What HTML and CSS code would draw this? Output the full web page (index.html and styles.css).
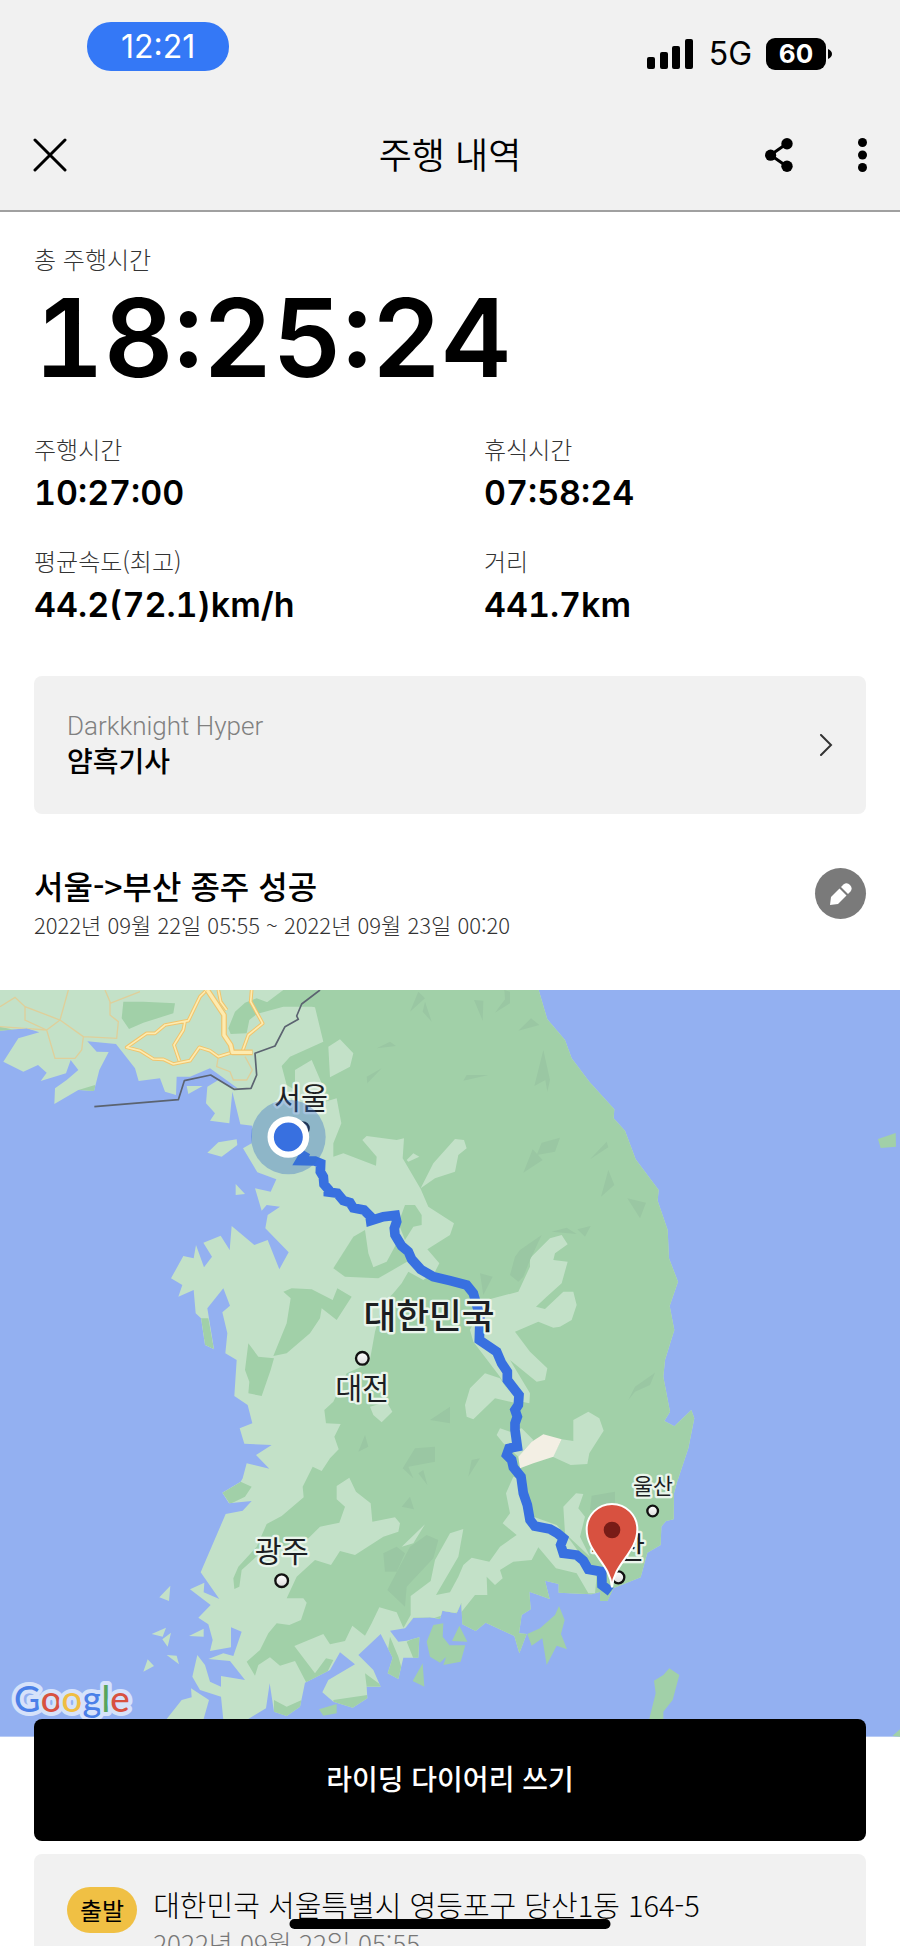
FILE: index.html
```html
<!DOCTYPE html>
<html lang="ko">
<head>
<meta charset="utf-8">
<meta name="viewport" content="width=device-width, initial-scale=1">
<title>주행 내역</title>
<link rel="stylesheet" href="styles.css">
</head>
<body>
<div class="app">
  <div class="top">
    <div class="status">
      <span class="clock">12:21</span>
      <div class="status-right">
        <svg class="signal" viewBox="0 0 46 30" aria-hidden="true"><rect x="0" y="18" width="8" height="12" rx="2"/><rect x="13" y="13" width="8" height="17" rx="2"/><rect x="25" y="7" width="8" height="23" rx="2"/><rect x="38" y="0" width="8" height="30" rx="2"/></svg>
        <span class="network">5G</span>
        <span class="battery"><span class="battery-body">60</span><svg class="battery-tip" viewBox="0 0 4 10" aria-hidden="true"><path d="M0 0Q4 2 4 5T0 10Z"/></svg></span>
      </div>
    </div>
    <header class="header">
      <button class="icon-btn" aria-label="닫기"><svg width="34" height="34" viewBox="0 0 34 34" fill="none" stroke="#000" stroke-width="3" stroke-linecap="round"><path d="M2 2L32 32M32 2L2 32"/></svg></button>
      <h1 class="header-title">주행 내역</h1>
      <div class="header-actions">
        <button class="icon-btn" aria-label="공유"><svg width="28" height="34" viewBox="0 0 28 34"><path d="M22 5.500L5.500 17L22 28.500" fill="none" stroke="#000" stroke-width="3"/><circle cx="22" cy="5.700" r="5.700"/><circle cx="5.600" cy="17.200" r="5.600"/><circle cx="22" cy="28.300" r="5.700"/></svg></button>
        <button class="icon-btn" aria-label="더보기"><svg width="9" height="34" viewBox="0 0 9 34"><circle cx="4.500" cy="4.500" r="4.500"/><circle cx="4.500" cy="17" r="4.500"/><circle cx="4.500" cy="29.500" r="4.500"/></svg></button>
      </div>
    </header>
  </div>

  <main class="main">
    <section class="summary">
      <p class="label">총 주행시간</p>
      <p class="total">18:25:24</p>
      <dl class="stats">
        <div><dt class="label">주행시간</dt><dd class="value">10:27:00</dd></div>
        <div><dt class="label">휴식시간</dt><dd class="value">07:58:24</dd></div>
        <div><dt class="label">평균속도(최고)</dt><dd class="value">44.2(72.1)km/h</dd></div>
        <div><dt class="label">거리</dt><dd class="value">441.7km</dd></div>
      </dl>
      <a class="bike" href="#bike">
        <span class="bike-text"><span class="bike-model">Darkknight Hyper</span><span class="bike-name">얌흑기사</span></span>
        <svg width="14" height="22" viewBox="0 0 14 22" fill="none" stroke="#333" stroke-width="2" stroke-linecap="round" aria-hidden="true"><path d="M2 1L12 11L2 21"/></svg>
      </a>
      <div class="ride">
        <div>
          <h2 class="ride-title">서울-&gt;부산 종주 성공</h2>
          <p class="ride-date">2022년 09월 22일 05:55 ~ 2022년 09월 23일 00:20</p>
        </div>
        <button class="edit" aria-label="제목 수정"><svg width="22" height="22" viewBox="0 0 22 22" fill="#fff" aria-hidden="true"><path d="M9.500 5.500L16.500 12.500L8 21L0 22L1 14Z"/><path d="M11 4L13.500 1.500Q17 -1 20 2T20.500 8.500L18 11Z"/></svg></button>
      </div>
    </section>

    <svg class="map" viewBox="0 0 2700 2240" role="img" aria-label="서울에서 부산까지의 주행 경로">
      <defs>
        <path id="land" d="M0 0L1616 0L1642 88L1695 150L1715 205L1768 275L1843 358L1841 385L1875 422L1907 508L1976 600L1973 632L2003 720L2007 805L2034 875L2009 948L2023 1020L1995 1110L1990 1160L2010 1265L1993 1293L2023 1309L2074 1260L2083 1285L2065 1375L2030 1480L2022 1510L2021 1588L1998 1593L1984 1610L1982 1665L1942 1688L1922 1762L1840 1795L1822 1833L1800 1832L1802 1805L1775 1813L1676 1808L1676 1782L1635 1772L1649 1827L1588 1805L1592 1858L1565 1875L1557 1930L1580 1932L1558 1990L1543 1938L1457 1898L1427 1923L1387 1903L1384 1838L1370 1870L1327 1862L1320 1887L1290 1882L1240 1883L1215 1915L1170 1922L1195 1955L1220 1952L1258 1942L1255 2003L1210 2003L1195 2067L1163 2050L1178 2003L1142 1932L1075 1995L1120 2040L1142 2090L1100 2090L1102 2125L1058 2153L1000 2135L967 2107L985 2070L1065 2023L1020 1987L990 2040L915 2078L900 2150L860 2178L822 2165L809 2080L798 2155L740 2190L670 2190L663 2120L600 2100L577 2060L592 1995L615 2025L630 2075L663 2090L663 2058L735 2070L690 2013L625 2007L670 1990L700 1998L725 1925L693 1912L693 1972L630 1983L638 1950L625 1903L595 1883L632 1845L570 1798L613 1778L611 1807L658 1827L602 1747L677 1572L728 1562L755 1533L687 1540L667 1508L722 1475L728 1465L740 1420L808 1436L768 1395L815 1365L733 1361L719 1315L757 1300L743 1245L703 1218L710 1110L676 1090L682 1030L667 967L690 947L670 895L622 955L642 1078L615 1065L603 985L587 970L581 900L535 920L547 885L513 865L550 798L581 805L588 765L612 832L636 800L610 758L662 737L689 780L695 708L763 765L803 750L838 838L866 787L796 715L803 675L840 650L800 645L785 662L765 595L812 605L829 568L772 547L729 475L755 460L757 407L721 403L697 305L688 400L630 392L645 370L618 340L622 290L655 270L690 290L715 296L630 235L570 260L530 260L528 315L495 305L480 265L416 273L405 235L348 162L262 154L290 185L326 186L298 240L282 303L235 300L163 342L165 295L200 270L235 240L212 210L198 250L122 273L140 248L114 225L70 245L10 215L55 145L118 127L80 115L0 122Z"/>
        <clipPath id="coast"><use href="#land"/></clipPath>
        <linearGradient id="knob" x1="0" y1="0" x2="0" y2="1"><stop offset="0" stop-color="#fff"/><stop offset="1" stop-color="#ddd"/></linearGradient>
      </defs>
      <rect width="2700" height="2240" fill="#93b0f1"/>
      <use href="#land" fill="#c3e1c8"/>
      <g clip-path="url(#coast)">
        <!-- wooded areas -->
        <g fill="#a1d0a8">
          <path d="M850 0L830 15L790 45L745 60L740 80L850 50L935 50L945 52L970 155L870 200L845 228L860 285L885 300L885 240L935 210L965 280L960 340L1010 325L1024 400L1000 460L1000 500L1030 490L1128 527L1130 500L1087 450L1100 438L1190 450L1212 445L1208 505L1262 597L1285 650L1362 700L1350 735L1282 778L1318 820L1305 845L1270 870L1225 845L1205 880L1180 910L1150 940L1125 1025L1108 1120L1040 1150L1000 1235L973 1260L978 1300L1022 1302L1003 1340L1016 1378L990 1405L965 1443L938 1430L908 1490L911 1522L845 1578L800 1602L770 1670L715 1730L700 1765L703 1797L718 1790L725 1740L780 1690L925 1645L960 1610L1018 1598L1035 1550L1010 1528L1010 1488L1048 1463L1068 1505L1112 1540L1117 1595L1185 1582L1200 1600L1195 1625L1150 1640L1065 1695L1020 1683L993 1725L945 1710L890 1760L860 1825L910 1825L920 1838L903 1890L868 1905L830 1900L805 1930L780 1980L740 2015L765 2057L775 2025L810 2002L840 2027L885 2013L920 2080L980 2050L1000 2010L978 2005L945 2050L883 1968L970 1932L990 1963L1035 1953L1057 1907L1095 1937L1115 1900L1138 1852L1190 1867L1210 1913L1260 1890L1300 1950L1600 2050L2150 2050L2150 0Z"/>
          <path d="M370 35L365 85L387 117L430 98L520 70L525 40L430 35ZM735 38L705 65L685 115L692 132L740 130L748 90L810 40L770 25Z"/>
          <path d="M1095 720L1060 740L1000 835L1035 860L1135 865L1230 810L1190 740Z"/>
          <path d="M1215 645L1245 645L1265 675L1265 705L1240 710L1215 750L1195 700Z"/>
          <path d="M850 905L875 895L935 898L998 930L1012 895L1055 920L1010 990L965 955L960 985L930 1030L860 1090L820 1098L860 1000L872 925Z"/>
          <path d="M745 1060L775 1100L822 1105L812 1140L785 1218L745 1210L748 1175L735 1140Z"/>
          <path d="M667 1508L722 1475L755 1490L735 1520L690 1542ZM603 985L625 985L642 1078L615 1065ZM0 110L45 120L0 130ZM235 300L285 285V305Z"/>
          <path d="M1095 2050L1150 2090L1100 2090ZM1000 2130L1102 2115L1102 2160H1000ZM822 2130L860 2150L905 2130L900 2180H822ZM1170 1940L1195 2000L1215 2070H1150ZM1220 1955L1260 1935V2005H1240ZM1800 1800H1840V1835H1800Z"/>
        </g>
        <!-- open ground inside the woods -->
        <g fill="#c3e1c8">
          <path d="M1095 720L1105 790L1120 832L1160 815L1190 760L1170 700ZM985 170L1020 148L1060 190L1050 230L990 262ZM1220 510L1240 490L1258 500L1225 515Z"/>
          <path d="M1262 595L1300 520L1365 447L1392 450L1400 475L1375 495L1365 545L1305 565Z"/>
          <path d="M1460 930L1555 905L1590 830L1590 805L1650 745L1685 735L1703 763L1665 790L1660 810L1703 815L1685 880L1640 920L1608 950L1635 957L1690 905L1720 905L1730 945L1715 990L1680 1010L1660 1013L1615 995L1545 1025L1590 1085L1642 1135L1635 1170L1610 1175L1530 1110L1590 1210L1588 1240L1540 1230L1500 1160L1420 1055L1410 1020L1440 960Z"/>
          <path d="M1395 1245L1410 1195L1455 1150L1500 1165L1550 1240L1485 1225L1420 1288L1400 1280Z"/>
          <path d="M1685 1348L1720 1353V1290L1765 1265L1798 1285L1811 1322L1768 1390L1762 1422L1712 1425L1658 1400ZM1565 1315L1600 1350L1555 1400L1510 1360L1490 1335L1500 1315L1530 1325Z"/>
          <path d="M1690 1550L1728 1510L1750 1512L1735 1555L1755 1580L1740 1640L1770 1700L1695 1630ZM1110 1250L1160 1235L1177 1265L1145 1297L1120 1275Z"/>
          <path d="M1540 1460L1575 1470L1600 1580L1670 1605L1710 1650L1790 1760L1785 1810L1765 1810L1730 1750L1668 1735L1615 1672L1595 1710L1540 1715L1500 1740L1508 1765L1485 1785L1460 1760L1462 1815L1425 1815L1385 1865L1330 1875L1210 1915L1232 1875V1818L1292 1773L1305 1710L1350 1630L1390 1617L1375 1700L1308 1815L1350 1807L1375 1760L1390 1725L1415 1703L1468 1715L1500 1670L1550 1635L1508 1600L1530 1570L1518 1510ZM1205 1670L1275 1603L1240 1660Z"/>
        </g>
        <path d="M1560 1435L1555 1400L1595 1355L1630 1333L1685 1348L1660 1400L1600 1420Z" fill="#f3efe4"/>
        <!-- hill shading -->
        <g fill="#9ac7a3">
          <path d="M1255 5L1275 25L1230 65ZM1275 35L1295 95L1268 65ZM1130 175L1170 155L1188 168ZM1100 260L1145 235L1102 280ZM1422 30L1450 32L1448 92ZM1513 0L1530 5V40L1485 68L1515 28ZM1555 122L1593 85L1618 105ZM1603 288L1630 180L1650 270L1642 305L1636 270ZM1390 272L1400 255L1465 255ZM1610 495L1625 458L1680 443L1665 485ZM1570 548L1598 478L1628 510ZM1770 508L1820 455L1825 472ZM1803 620L1825 540L1843 585ZM1882 625L1938 638L1920 685ZM1530 855L1545 800L1560 780L1625 735L1590 810L1570 860L1555 875ZM1655 725L1700 713L1730 732ZM1732 718L1772 708L1755 740ZM1440 850L1478 860L1450 915ZM1885 1230L1905 1190L1965 1148L1950 1185L1905 1205ZM1290 1290L1350 1250V1300ZM1405 1460L1415 1410L1440 1405ZM1075 1385L1095 1335L1105 1370ZM1208 1435L1245 1375L1305 1370V1415L1225 1430L1240 1465ZM1205 1550L1230 1520L1242 1558ZM1255 1450L1270 1440L1282 1485ZM1162 1800L1230 1670L1280 1635L1315 1650L1300 1705L1220 1790L1215 1850ZM1155 1745L1150 1690L1190 1670L1215 1690L1190 1745ZM1775 1517L1845 1505V1560H1770Z"/>
        </g>
        <!-- minor roads -->
        <g fill="none" stroke="#dfcf9a" stroke-width="4">
          <path d="M0 50L45 22L75 50L180 90L205 0M75 50V90L140 120L180 90L250 140L245 180L225 205H165L140 120M315 0L330 35V75L355 95L350 145L250 140M330 40L420 5M0 110L140 120M655 200L650 230L690 245L700 270L740 270L757 240L735 200"/>
        </g>
      </g>
      <!-- islands -->
      <g fill="#c3e1c8"><path d="M560 288H608L565 312ZM622 488L655 457L710 448L712 465L665 500ZM707 582L735 612L707 615ZM478 1822L511 1787L507 1833ZM455 1932L498 1913L488 1940ZM487 1948L513 1928L503 1970ZM500 1995L530 1997L537 2023ZM430 2045L443 2008L462 2028ZM567 1938L611 1916V1940ZM500 2187L545 2130L575 2122L573 2095L627 2130L610 2190Z"/></g>
      <g fill="#a1d0a8"><path d="M957 2158L1010 2142V2170L970 2177ZM1238 2073L1268 2020L1273 2090ZM1300 1905L1330 1900L1328 1940L1360 1980L1320 2018L1290 2000L1280 1955ZM1378 1907L1402 1955L1356 1953ZM1350 1966H1396L1382 2015L1330 2025ZM1582 1932L1620 1915L1665 1875L1677 1848L1694 1890L1683 1932L1701 1978L1670 1967L1640 2025L1627 1945L1595 1967ZM1962 2072L1990 2055L2008 2035L2038 2055L2018 2130L1990 2165V2210H1942L1967 2110ZM2634 447L2687 429L2688 470L2642 474ZM2677 2238L2700 2218V2240Z"/></g>
      <!-- highways -->
      <g fill="none" stroke-linejoin="round">
        <g stroke="#f1c46c" stroke-width="11"><path d="M620 0L600 20L565 92L495 105L465 130L440 130L380 172L420 182L460 207L490 208L520 222L570 212L598 172L630 182L655 200L697 187M555 95L550 120L522 165L538 212M755 0L752 35L788 100L745 135L728 182M655 0L662 35L680 60"/></g>
        <path d="M620 0L600 20L565 92L495 105L465 130L440 130L380 172L420 182L460 207L490 208L520 222L570 212L598 172L630 182L655 200L697 187M555 95L550 120L522 165L538 212M755 0L752 35L788 100L745 135L728 182M655 0L662 35L680 60" stroke="#fdebb0" stroke-width="5"/>
        <path d="M622 0L672 75V135L692 165L697 187H758" stroke="#f1c46c" stroke-width="17"/>
        <path d="M622 0L672 75V135L692 165L697 187H756" stroke="#fdebb0" stroke-width="10"/>
        <path d="M283 350L535 329L553 272L632 255L702 298L753 295L770 255L765 190L825 168L855 110L895 88L890 78L905 42L960 0" stroke="#5b6370" stroke-width="5"/>
      </g>
      <path d="M918 485L902 512L945 513L962 520L961 545L970 560L972 583L985 598L985 606L1012 610L1030 632L1050 638L1060 654L1092 660L1110 678L1112 692L1150 680L1186 676L1190 695L1183 715L1185 735L1205 768L1225 785L1235 808L1262 838L1300 860L1350 872L1400 885L1420 910L1430 945L1440 980L1438 1050L1490 1085L1505 1120L1522 1145L1522 1170L1545 1200L1557 1215L1555 1245L1545 1260L1552 1280L1545 1300L1545 1320L1552 1370L1527 1375L1520 1395L1535 1410L1540 1432L1563 1460L1570 1510L1582 1545L1590 1590L1604 1608L1650 1617L1672 1630L1690 1645L1682 1665L1690 1690L1730 1695L1750 1712L1765 1738L1805 1745L1806 1785L1832 1805" fill="none" stroke="#3870e0" stroke-width="29"/>
      <!-- city dots and names -->
      <g fill="url(#knob)" stroke="#111" stroke-width="7"><circle cx="908" cy="415" r="18"/><circle cx="1087" cy="1105" r="19"/><circle cx="845" cy="1772" r="19"/><circle cx="1958" cy="1563" r="16"/><circle cx="1855" cy="1762" r="18"/></g>
      <g class="city"><text x="903" y="358">서울</text><text x="1087" y="1226">대전</text><text x="845" y="1716">광주</text><text x="1854" y="1704">부산</text></g>
      <text class="city city-small" x="1959" y="1512">울산</text>
      <text class="city city-country" x="1287" y="1017">대한민국</text>
      <circle cx="865" cy="441" r="112" fill="#3870c8" fill-opacity=".38"/>
      <circle cx="865" cy="441" r="53" fill="#3870e0" stroke="#fff" stroke-width="19"/>
      <path d="M1836 1792C1831 1720 1760 1688 1760 1618A76 76 0 0 1 1912 1618C1912 1688 1841 1720 1836 1792Z" fill="#d85140" stroke="#fff" stroke-width="6"/>
      <circle cx="1836" cy="1620" r="25" fill="#781c17"/>
      <text class="google" x="42" y="2165"><tspan fill="#4a80e8">G</tspan><tspan fill="#d85140">o</tspan><tspan fill="#f0bd42">o</tspan><tspan fill="#4a80e8">g</tspan><tspan fill="#58a55c">l</tspan><tspan fill="#d85140">e</tspan></text>
    </svg>

    <div class="bottom">
      <button class="write">라이딩 다이어리 쓰기</button>
      <section class="place">
        <span class="badge">출발</span>
        <div>
          <p class="address">대한민국 서울특별시 영등포구 당산1동 164-5</p>
          <p class="place-date">2022년 09월 22일 05:55</p>
        </div>
      </section>
    </div>
  </main>
  <div class="home-indicator"></div>
</div>
</body>
</html>
```
FILE: styles.css
```css
* { box-sizing: border-box; margin: 0; padding: 0; }

body {
  background: #fff;
  color: #000;
  font-family: "Noto Sans CJK KR", "Noto Sans", sans-serif;
}

button { border: 0; background: none; font: inherit; color: inherit; cursor: pointer; }
a { color: inherit; text-decoration: none; }
svg { display: block; }

.app { position: relative; height: 100vh; overflow: hidden; }

.top { background: #f1f1f1; border-bottom: 2px solid #a0a0a0; }

.status {
  display: flex;
  justify-content: space-between;
  align-items: flex-start;
  height: 100px;
  padding: 22px 68px 0 87px;
  font-family: Inter, sans-serif;
}
.clock {
  padding: 0 34px;
  border-radius: 24px;
  background: #3478f6;
  color: #fff;
  font-size: 32px;
  line-height: 49px;
}
.status-right { display: flex; align-items: center; padding-top: 12px; }
.signal { width: 46px; height: 30px; }
.network { margin: 0 14px 0 16px; font-size: 32px; line-height: 40px; }
.battery { display: flex; align-items: center; gap: 2px; }
.battery-body {
  width: 60px;
  border-radius: 9px;
  background: #000;
  color: #fff;
  font-size: 26px;
  font-weight: 700;
  line-height: 32px;
  text-align: center;
}
.battery-tip { width: 4px; height: 10px; }

.header {
  display: grid;
  grid-template-columns: 1fr auto 1fr;
  align-items: center;
  height: 110px;
  padding: 0 33px;
}
.header-title { padding-bottom: 4px; font-size: 36px; font-weight: 350; line-height: 50px; }
.header-actions { display: flex; justify-content: flex-end; gap: 65px; }
.icon-btn { display: flex; }

.summary { padding: 27px 34px 48px; }
.label { color: #333; font-size: 24px; font-weight: 300; line-height: 40px; }
.total {
  font-family: Inter, sans-serif;
  font-size: 108px;
  font-weight: 600;
  font-variant-numeric: tabular-nums;
  line-height: 118px;
}
.stats { display: grid; grid-template-columns: 1fr 1fr; gap: 24px 68px; margin-top: 32px; }
.value {
  font-family: Inter, sans-serif;
  font-size: 34px;
  font-weight: 600;
  font-variant-numeric: tabular-nums;
  line-height: 48px;
}

.bike {
  display: flex;
  justify-content: space-between;
  align-items: center;
  margin-top: 47px;
  padding: 33px;
  border-radius: 8px;
  background: #f1f1f1;
}
.bike-text { display: grid; }
.bike-model { color: #808080; font-family: Roboto, sans-serif; font-size: 26px; font-weight: 300; line-height: 34px; }
.bike-name { padding-bottom: 4px; font-size: 28px; font-weight: 500; line-height: 34px; }

.ride { display: flex; justify-content: space-between; align-items: flex-start; margin-top: 48px; }
.ride-title { font-size: 32px; font-weight: 500; line-height: 46px; }
.ride-date { padding-bottom: 2px; color: #333; font-size: 22px; font-weight: 300; line-height: 32px; }
.edit {
  display: grid;
  place-items: center;
  width: 51px;
  height: 51px;
  margin-top: 6px;
  border-radius: 50%;
  background: #7a7a7a;
}

.map { width: 100%; height: auto; }
.city {
  fill: #1c1e22;
  stroke: #eaf5ec;
  stroke-width: 14px;
  stroke-linejoin: round;
  paint-order: stroke;
  font-size: 88px;
  text-anchor: middle;
}
.city-small { font-size: 65px; }
.city-country { font-size: 107px; font-weight: 500; }
.google {
  stroke: #d6e2fa;
  stroke-width: 24px;
  stroke-linejoin: round;
  paint-order: stroke;
  font-family: Lato, sans-serif;
  font-size: 110px;
  font-weight: 500;
}

.bottom { position: relative; display: grid; gap: 13px; margin-top: -18px; padding: 0 34px; }
.write {
  height: 122px;
  padding-bottom: 4px;
  border-radius: 8px;
  background: #000;
  color: #fff;
  font-size: 28px;
  font-weight: 500;
  line-height: 40px;
}
.place {
  display: flex;
  align-items: flex-start;
  gap: 16px;
  padding: 29px 33px;
  border-radius: 8px;
  background: #f1f1f1;
}
.badge {
  margin-top: 4px;
  padding: 0 13px;
  border-radius: 23px;
  background: #f0c044;
  font-size: 24px;
  line-height: 46px;
}
.address { font-size: 29px; font-weight: 300; line-height: 42px; }
.place-date { color: #777; font-size: 26px; font-weight: 300; line-height: 36px; }

.home-indicator {
  position: absolute;
  bottom: 17px;
  left: 50%;
  width: 321px;
  height: 10px;
  border-radius: 5px;
  background: #000;
  transform: translateX(-50%);
}
```
